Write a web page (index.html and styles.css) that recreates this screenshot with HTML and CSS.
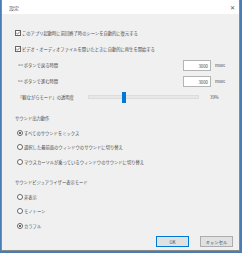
FILE: index.html
```html
<!DOCTYPE html>
<html lang="ja">
<head>
    <meta charset="UTF-8">
    <title>設定</title>
    <link rel="stylesheet" href="styles.css">
</head>
<body>
    <div class="window">
        <div class="titlebar">
            <span class="title">設定</span>
            <span class="close">✕</span>
        </div>
        <div class="content">
            <!-- checkboxes -->
            <div class="row">
                <svg class="box" viewBox="0 0 6 6"><rect x="0.5" y="0.5" width="5" height="5" fill="#fff" stroke="#666"/><path d="M1.3 3 L2.5 4.2 L4.8 1.6" fill="none" stroke="#444" stroke-width="0.7"/></svg>
                <span>このアプリ起動時に前回終了時のシーンを自動的に復元する</span>
            </div>
            <div class="row">
                <svg class="box" viewBox="0 0 6 6"><rect x="0.5" y="0.5" width="5" height="5" fill="#fff" stroke="#666"/><path d="M1.3 3 L2.5 4.2 L4.8 1.6" fill="none" stroke="#444" stroke-width="0.7"/></svg>
                <span>ビデオ・オーディオファイルを開いたときに自動的に再生を開始する</span>
            </div>

            <!-- seek times -->
            <div class="row field">
                <span class="label">&lt;&lt; ボタンで戻る時間</span>
                <span class="num">3000</span>
                <span class="unit">msec</span>
            </div>
            <div class="row field">
                <span class="label">&gt;&gt; ボタンで進む時間</span>
                <span class="num">3000</span>
                <span class="unit">msec</span>
            </div>
            <div class="row field">
                <span class="label">「観ながらモード」の透明度</span>
                <div class="slider">
                    <div class="track"></div>
                    <div class="thumb" style="left: 34px"></div>
                </div>
                <span class="pct">39%</span>
            </div>

            <!-- sound output -->
            <div class="heading">サウンド出力動作</div>
            <div class="opt">
                <span class="radio on"></span>
                <span>すべてのサウンドをミックス</span>
            </div>
            <div class="opt">
                <span class="radio"></span>
                <span>選択した最前面のウィンドウのサウンドに切り替え</span>
            </div>
            <div class="opt">
                <span class="radio"></span>
                <span>マウスカーソルが乗っているウィンドウのサウンドに切り替え</span>
            </div>

            <!-- visualizer -->
            <div class="heading">サウンドビジュアライザー表示モード</div>
            <div class="opt">
                <span class="radio"></span>
                <span>非表示</span>
            </div>
            <div class="opt">
                <span class="radio"></span>
                <span>モノトーン</span>
            </div>
            <div class="opt">
                <span class="radio on"></span>
                <span>カラフル</span>
            </div>

            <div class="buttons">
                <button class="btn ok">OK</button>
                <button class="btn">キャンセル</button>
            </div>
        </div>
    </div>
</body>
</html>
```

FILE: styles.css
```css
body {
    margin: 0;
    background-color: #4a7db3;
    font-family: "Noto Sans CJK JP", "Noto Sans", sans-serif;
    color: #4a4a4a;
    overflow: hidden;
}
.window {
    margin-left: 1px;
    width: 237px;
    height: 250px;
    border: 1px solid #8a8a8a;
    border-top: none;
    background-color: #f0f0f0;
    display: flex;
    flex-direction: column;
}
.titlebar {
    height: 14px;
    background-color: #fff;
    display: flex;
    align-items: center;
    justify-content: space-between;
    padding: 0 4px 0 7px;
    font-size: 5px;
}
.close {
    font-size: 6px;
    color: #555;
}
.content {
    flex: 1;
    display: flex;
    flex-direction: column;
    padding: 11px 0 0 13px;
    font-size: 4.3px;
}
.row {
    height: 16px;
    display: flex;
    align-items: center;
    white-space: nowrap;
}
.box {
    width: 6px;
    height: 6px;
    margin-right: 1px;
}
.field {
    padding-left: 3px;
}
.label {
    width: 165px;
}
.num {
    box-sizing: border-box;
    width: 28px;
    height: 11px;
    line-height: 10px;
    background-color: #fff;
    border: 1px solid #b4b4b4;
    text-align: right;
    padding-right: 2px;
}
.unit {
    margin-left: 4px;
}
.field .label + .slider {
    margin-left: -95px;
}
.slider {
    position: relative;
    width: 111px;
    height: 11px;
    display: flex;
    align-items: center;
}
.track {
    width: 100%;
    height: 2px;
    background-color: #e7e7e7;
    border: 1px solid #dcdcdc;
}
.thumb {
    position: absolute;
    top: 0;
    width: 4px;
    height: 11px;
    background-color: #0078d7;
}
.pct {
    margin-left: 11px;
}
.heading {
    height: 14.5px;
    display: flex;
    align-items: center;
    margin-top: 6px;
    white-space: nowrap;
}
.opt {
    height: 14.5px;
    display: flex;
    align-items: center;
    padding-left: 2px;
    white-space: nowrap;
}
.radio {
    box-sizing: border-box;
    width: 6px;
    height: 6px;
    border: 1px solid #666;
    border-radius: 50%;
    background-color: #fff;
    margin-right: 1px;
    display: flex;
    align-items: center;
    justify-content: center;
}
.radio.on::after {
    content: "";
    width: 2px;
    height: 2px;
    border-radius: 50%;
    background-color: #333;
}
.buttons {
    display: flex;
    justify-content: flex-end;
    gap: 11px;
    margin-top: auto;
    margin-bottom: 3px;
    padding-right: 6px;
}
.btn {
    width: 33px;
    height: 11px;
    padding: 0;
    font-family: inherit;
    font-size: 4.3px;
    color: #4a4a4a;
    background-color: #e1e1e1;
    border: 1px solid #adadad;
}
.btn.ok {
    border-color: #0078d7;
}
```
